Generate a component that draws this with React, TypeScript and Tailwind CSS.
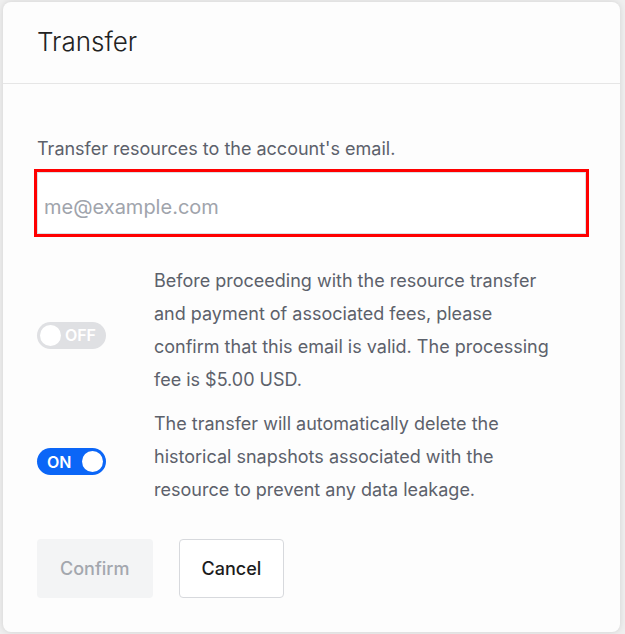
import React from "react";

function Toggle({ on }: { on: boolean }) {
  if (on) {
    return (
      <div className="relative flex h-[27px] w-[69px] shrink-0 items-center rounded-full bg-[#0b66f7]">
        <span className="pl-[10px] text-[16px] font-semibold leading-none text-white">ON</span>
        <span className="absolute right-[3px] top-[3px] h-[21px] w-[21px] rounded-full bg-white" />
      </div>
    );
  }
  return (
    <div className="relative flex h-[27px] w-[69px] shrink-0 items-center justify-end rounded-full bg-[#dfe0e3]">
      <span className="absolute left-[3px] top-[3px] h-[21px] w-[21px] rounded-full bg-white" />
      <span className="pr-[10px] text-[16px] font-semibold leading-none text-white">OFF</span>
    </div>
  );
}

export default function App() {
  return (
    <div
      className="min-h-[634px] w-full bg-[#efefef] pb-[2px] pl-[3px] pr-[5px] pt-[2px]"
      style={{ fontFamily: "Inter, Roboto, 'Noto Sans', sans-serif" }}
    >
      <div className="flex h-[630px] w-[617px] flex-col rounded-[8px] bg-[#fdfdfd] shadow-[0_0_6px_rgba(0,0,0,0.12)]">
        <div className="flex h-[82px] items-center border-b border-[#e6e6e6] px-[34px] pb-[2px]">
          <h1 className="text-[26px] font-light leading-none text-[#222]">Transfer</h1>
        </div>
        <div className="flex flex-col px-[34px] pt-[52px]">
          <p className="text-[18px] leading-[26px] text-[#5c616b]">
            Transfer resources to the account's email.
          </p>
          <div className="-mx-[3px] mt-[7px] border-[3px] border-[#ff0000]">
            <input
              className="block h-[62px] w-full border border-[#dcdee4] bg-white px-[6px] pt-[8px] text-[20px] text-[#333] outline-none placeholder:text-[#a0a4ac]"
              placeholder="me@example.com"
            />
          </div>
          <div className="mt-[27px] flex items-center gap-[48px]">
            <div className="pt-[10px]">
              <Toggle on={false} />
            </div>
            <p className="w-[406px] text-[18px] leading-[33px] text-[#5c616b]">
              Before proceeding with the resource transfer and payment of associated fees, please
              confirm that this email is valid. The processing fee is $5.00 USD.
            </p>
          </div>
          <div className="mt-[11px] flex items-center gap-[48px]">
            <div className="pt-[10px]">
              <Toggle on={true} />
            </div>
            <p className="w-[406px] text-[18px] leading-[33px] text-[#5c616b]">
              The transfer will automatically delete the historical snapshots associated with the
              resource to prevent any data leakage.
            </p>
          </div>
          <div className="mt-[33px] flex gap-[26px]">
            <button className="h-[59px] rounded-[4px] bg-[#f3f4f5] px-[23px] text-[18px] font-medium text-[#a3a7ae]">
              Confirm
            </button>
            <button className="h-[59px] rounded-[4px] border border-[#d7d9dd] bg-white px-[22px] text-[18px] font-medium text-[#1c1c1c]">
              Cancel
            </button>
          </div>
        </div>
      </div>
    </div>
  );
}
